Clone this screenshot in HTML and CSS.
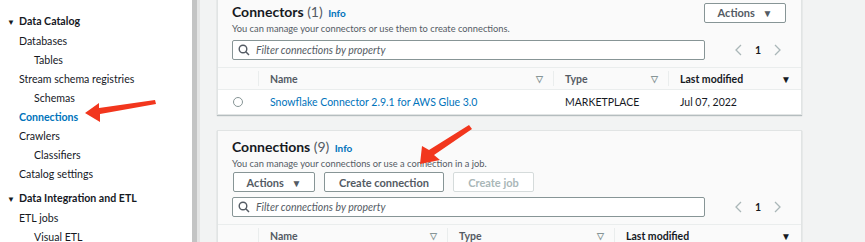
FILE: index.html
```html
<!DOCTYPE html>
<html lang="en">
<head>
  <meta charset="UTF-8" />
  <title>AWS Glue - Connections</title>
  <link rel="stylesheet" href="styles.css">
</head>
<body>
  <nav class="sidebar">
    <div class="nav-section"><span class="caret">&#9660;</span>Data Catalog</div>
    <a class="nav-item">Databases</a>
    <a class="nav-item sub">Tables</a>
    <a class="nav-item">Stream schema registries</a>
    <a class="nav-item sub">Schemas</a>
    <a class="nav-item active">Connections</a>
    <a class="nav-item">Crawlers</a>
    <a class="nav-item sub">Classifiers</a>
    <a class="nav-item">Catalog settings</a>
    <div class="nav-section spaced"><span class="caret">&#9660;</span>Data Integration and ETL</div>
    <a class="nav-item">ETL jobs</a>
    <a class="nav-item sub">Visual ETL</a>
  </nav>
  <div class="scrollbar"></div>

  <main class="content">
    <section class="card card-first">
      <div class="card-head">
        <div class="title-row">
          <h2 class="card-title">Connectors <span class="count">(1)</span> <a class="info">Info</a></h2>
          <button class="btn btn-actions">Actions <span class="btn-caret">&#9660;</span></button>
        </div>
        <p class="card-desc">You can manage your connectors or use them to create connections.</p>
        <div class="search-row">
          <label class="search">
            <svg width="12" height="12" viewBox="0 0 12 12"><circle cx="5" cy="5" r="3.8" fill="none" stroke="#545b64" stroke-width="1.4"/><line x1="7.8" y1="7.8" x2="11" y2="11" stroke="#545b64" stroke-width="1.5"/></svg>
            <input type="text" placeholder="Filter connections by property">
          </label>
          <div class="pager">
            <svg width="8" height="12" viewBox="0 0 8 12"><polyline points="7,1 2,6 7,11" fill="none" stroke="#aab7b8" stroke-width="1.3"/></svg>
            <b>1</b>
            <svg width="8" height="12" viewBox="0 0 8 12"><polyline points="1,1 6,6 1,11" fill="none" stroke="#aab7b8" stroke-width="1.3"/></svg>
          </div>
        </div>
      </div>
      <div class="table connectors-table">
        <div class="th"></div>
        <div class="th sep">Name <span class="sort">&#9661;</span></div>
        <div class="th sep">Type <span class="sort">&#9661;</span></div>
        <div class="th sep">Last modified <span class="sort active">&#9660;</span></div>
        <div class="td"><span class="radio"></span></div>
        <div class="td"><a class="link">Snowflake Connector 2.9.1 for AWS Glue 3.0</a></div>
        <div class="td">MARKETPLACE</div>
        <div class="td">Jul 07, 2022</div>
      </div>
    </section>

    <section class="card">
      <div class="card-head">
        <div class="title-row">
          <h2 class="card-title">Connections <span class="count">(9)</span> <a class="info">Info</a></h2>
        </div>
        <p class="card-desc">You can manage your connections or use a connection in a job.</p>
        <div class="button-row">
          <button class="btn btn-actions">Actions <span class="btn-caret">&#9660;</span></button>
          <button class="btn btn-create">Create connection</button>
          <button class="btn btn-job" disabled>Create job</button>
        </div>
        <div class="search-row">
          <label class="search">
            <svg width="12" height="12" viewBox="0 0 12 12"><circle cx="5" cy="5" r="3.8" fill="none" stroke="#545b64" stroke-width="1.4"/><line x1="7.8" y1="7.8" x2="11" y2="11" stroke="#545b64" stroke-width="1.5"/></svg>
            <input type="text" placeholder="Filter connections by property">
          </label>
          <div class="pager">
            <svg width="8" height="12" viewBox="0 0 8 12"><polyline points="7,1 2,6 7,11" fill="none" stroke="#aab7b8" stroke-width="1.3"/></svg>
            <b>1</b>
            <svg width="8" height="12" viewBox="0 0 8 12"><polyline points="1,1 6,6 1,11" fill="none" stroke="#aab7b8" stroke-width="1.3"/></svg>
          </div>
        </div>
      </div>
      <div class="table connections-table">
        <div class="th"></div>
        <div class="th sep">Name <span class="sort">&#9661;</span></div>
        <div class="th sep">Type <span class="sort">&#9661;</span></div>
        <div class="th sep">Last modified <span class="sort active">&#9660;</span></div>
      </div>
    </section>
  </main>

  <!-- annotation arrows drawn over the screenshot -->
  <svg class="arrows" width="865" height="242" viewBox="0 0 865 242">
    <polygon points="85,113 99,103 99,108 155,100 156,104 100,114 100,122" fill="#f2361d"/>
    <polygon points="420,164 422,146 429,150 469,125 472,129 434,155 440,160" fill="#f2361d"/>
  </svg>
</body>
</html>
```

FILE: styles.css
```css
body {
  font-family: Lato, 'Liberation Sans', sans-serif;
  margin: 0;
  display: flex;
  height: 242px;
  overflow: hidden;
  background-color: #f2f3f3;
  color: #16191f;
  font-size: 10.5px;
}

.sidebar {
  width: 192px;
  flex-shrink: 0;
  background-color: white;
  padding-top: 12px;
  display: flex;
  flex-direction: column;
  font-size: 10.6px;
}

.nav-section {
  font-weight: bold;
  line-height: 19px;
  padding-left: 7px;
}

.nav-section.spaced {
  margin-top: 5px;
}

.caret {
  display: inline-block;
  width: 12px;
  font-size: 8px;
}

.nav-item {
  line-height: 19px;
  padding-left: 19px;
  color: #16191f;
}

.nav-item.sub {
  padding-left: 34px;
}

.nav-item.active {
  color: #0073bb;
  font-weight: bold;
}

.scrollbar {
  width: 5px;
  flex-shrink: 0;
  background-color: #c3c4c4;
  border-right: 3px solid #e4e5e5;
}

.content {
  padding-left: 17px;
  display: flex;
  flex-direction: column;
  gap: 15px;
}

.card {
  width: 583px;
  background-color: #fafafa;
  border: 1px solid #e1e4e4;
  box-shadow: 0 1px 1px rgba(0,28,36,0.25);
  flex-shrink: 0;
}

.card-first {
  margin-top: -1px;
  border-top: none;
}

.card-head {
  padding: 3px 15px 0 14px;
}

.card + .card .card-head {
  padding-top: 6px;
}

.title-row {
  display: flex;
  justify-content: space-between;
  align-items: center;
}

.card-title {
  margin: 0;
  font-size: 14px;
  line-height: 20px;
  font-weight: bold;
}

.count {
  font-weight: normal;
  color: #545b64;
}

.info {
  color: #0073bb;
  font-size: 10px;
  font-weight: bold;
  margin-left: 2px;
}

.card-desc {
  margin: 0;
  font-size: 9.3px;
  line-height: 11px;
  color: #545b64;
}

.btn {
  height: 20px;
  padding: 0;
  background-color: white;
  border: 1px solid #879596;
  border-radius: 2px;
  font-family: inherit;
  font-size: 11px;
  font-weight: bold;
  color: #545b64;
}

.btn-actions {
  width: 82px;
}

.btn-caret {
  font-size: 10px;
  margin-left: 5px;
}

.btn-create {
  width: 120px;
}

.btn-job {
  width: 81px;
  color: #aab7b8;
  border-color: #d5dbdb;
}

.button-row {
  display: flex;
  gap: 9px;
  margin-top: 3px;
  padding-left: 1px;
}

.search-row {
  display: flex;
  align-items: center;
  margin-top: 6px;
}

.card + .card .search-row {
  margin-top: 5px;
}

.search {
  width: 466px;
  height: 18px;
  display: flex;
  align-items: center;
  gap: 6px;
  padding-left: 5px;
  border: 1px solid #879596;
  border-radius: 2px;
  background-color: white;
}

.search input {
  border: none;
  outline: none;
  padding: 0;
  flex: 1;
  font-family: inherit;
  font-size: 10.5px;
  font-style: italic;
  background: transparent;
}

.search input::placeholder {
  color: #545b64;
}

.pager {
  flex: 1;
  display: flex;
  justify-content: flex-end;
  align-items: center;
  gap: 13px;
  padding-right: 4px;
  font-size: 10.5px;
}

.table {
  display: grid;
  margin-top: 7px;
}

.connectors-table {
  grid-template-columns: 40px 295px 115px 133px;
}

.connections-table {
  grid-template-columns: 40px 189px 167px 187px;
}

.th {
  height: 23px;
  box-sizing: border-box;
  border-top: 1px solid #eaeded;
  border-bottom: 1px solid #eaeded;
  font-weight: bold;
  color: #545b64;
  display: flex;
  align-items: center;
  justify-content: space-between;
  position: relative;
  padding: 0 10px 0 12px;
}

.th.sep::before {
  content: "";
  position: absolute;
  left: 0;
  top: 3px;
  bottom: 3px;
  border-left: 1px solid #eaeded;
}

.th:nth-child(4) {
  color: #16191f;
}

.sort {
  color: #879596;
  font-size: 9px;
}

.sort.active {
  color: #16191f;
  font-size: 10px;
}

.td {
  height: 24px;
  background-color: white;
  display: flex;
  align-items: center;
  padding-left: 12px;
}

.td:nth-child(5) {
  padding-left: 15px;
}

.radio {
  width: 8px;
  height: 8px;
  border: 1px solid #879596;
  border-radius: 50%;
  background-color: white;
}

.link {
  color: #0073bb;
}

.arrows {
  position: absolute;
  top: 0;
  left: 0;
  pointer-events: none;
}
```
